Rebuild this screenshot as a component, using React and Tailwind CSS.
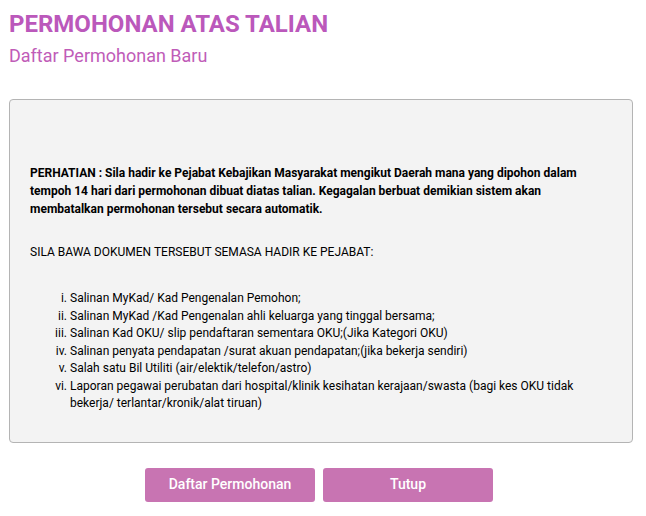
export default function App() {
  const docs = [
    'Salinan MyKad/ Kad Pengenalan Pemohon;',
    'Salinan MyKad /Kad Pengenalan ahli keluarga yang tinggal bersama;',
    'Salinan Kad OKU/ slip pendaftaran sementara OKU;(Jika Kategori OKU)',
    'Salinan penyata pendapatan /surat akuan pendapatan;(jika bekerja sendiri)',
    'Salah satu Bil Utiliti (air/elektik/telefon/astro)',
    'Laporan pegawai perubatan dari hospital/klinik kesihatan kerajaan/swasta (bagi kes OKU tidak bekerja/ terlantar/kronik/alat tiruan)',
  ];

  return (
    <div className="min-h-screen bg-white px-[9px] pt-[9px] font-['Roboto',sans-serif] text-black">
      <h1 className="text-[24px] font-bold leading-[30px] text-[#bb58bb]">PERMOHONAN ATAS TALIAN</h1>
      <h2 className="mt-[6px] text-[18px] leading-[22px] text-[#c05cb8]">Daftar Permohonan Baru</h2>

      <div className="mt-[32px] w-[624px] rounded-[4px] border border-[#b4b4b4] bg-[#f3f3f3] px-5 pb-[29px] pt-[64px] text-[12px] leading-[18px]">
        <p className="font-bold">
          PERHATIAN : Sila hadir ke Pejabat Kebajikan Masyarakat mengikut Daerah mana yang dipohon dalam tempoh 14
          hari dari permohonan dibuat diatas talian. Kegagalan berbuat demikian sistem akan membatalkan permohonan
          tersebut secara automatik.
        </p>
        <p className="mt-[25px]">SILA BAWA DOKUMEN TERSEBUT SEMASA HADIR KE PEJABAT:</p>
        <ol className="mt-[29px] list-outside list-[lower-roman] pl-10 leading-[17.5px]">
          {docs.map((d, i) => (
            <li key={i}>{d}</li>
          ))}
        </ol>
      </div>

      <div className="mt-[25px] flex w-[624px] justify-center gap-2 pr-[4px]">
        <button className="h-[34px] w-[170px] rounded-[3px] bg-[#c874b2] text-[14px] font-medium text-white">
          Daftar Permohonan
        </button>
        <button className="h-[34px] w-[170px] rounded-[3px] bg-[#c874b2] text-[14px] font-medium text-white">
          Tutup
        </button>
      </div>
    </div>
  );
}
